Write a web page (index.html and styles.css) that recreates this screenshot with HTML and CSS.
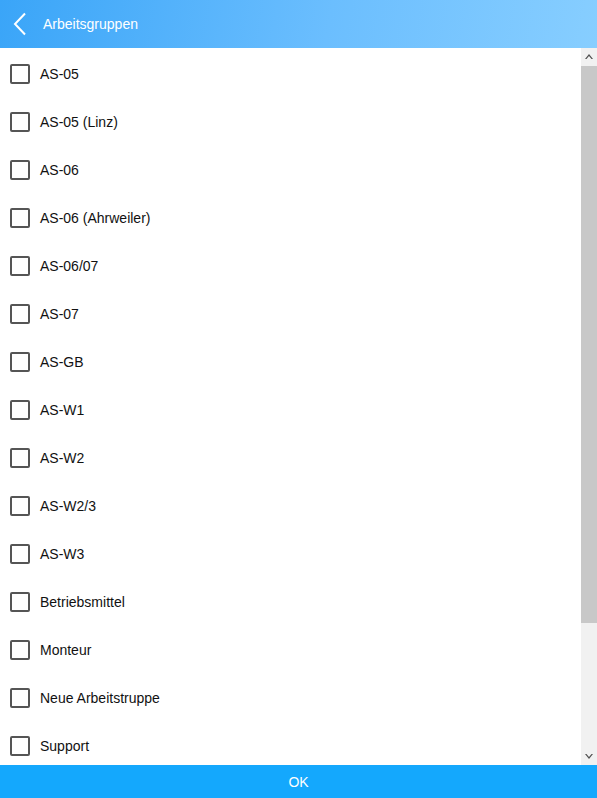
FILE: index.html
```html
<!DOCTYPE html>
<html lang="de">
<head>
<meta charset="utf-8">
<title>Arbeitsgruppen</title>
<link rel="stylesheet" href="styles.css">
</head>
<body>
<div class="app">
  <header class="header">
    <span class="back">
      <svg width="14" height="24" viewBox="0 0 14 24"><path d="M12 1.5 L2 12 L12 22.5" fill="none" stroke="#fff" stroke-width="2"/></svg>
    </span>
    <span class="title">Arbeitsgruppen</span>
  </header>
  <div class="main">
    <ul class="list">
      <li class="row"><span class="box"></span><span class="label">AS-05</span></li>
      <li class="row"><span class="box"></span><span class="label">AS-05 (Linz)</span></li>
      <li class="row"><span class="box"></span><span class="label">AS-06</span></li>
      <li class="row"><span class="box"></span><span class="label">AS-06 (Ahrweiler)</span></li>
      <li class="row"><span class="box"></span><span class="label">AS-06/07</span></li>
      <li class="row"><span class="box"></span><span class="label">AS-07</span></li>
      <li class="row"><span class="box"></span><span class="label">AS-GB</span></li>
      <li class="row"><span class="box"></span><span class="label">AS-W1</span></li>
      <li class="row"><span class="box"></span><span class="label">AS-W2</span></li>
      <li class="row"><span class="box"></span><span class="label">AS-W2/3</span></li>
      <li class="row"><span class="box"></span><span class="label">AS-W3</span></li>
      <li class="row"><span class="box"></span><span class="label">Betriebsmittel</span></li>
      <li class="row"><span class="box"></span><span class="label">Monteur</span></li>
      <li class="row"><span class="box"></span><span class="label">Neue Arbeitstruppe</span></li>
      <li class="row"><span class="box"></span><span class="label">Support</span></li>
    </ul>
    <div class="scrollbar">
      <div class="sb-btn">
        <svg width="8" height="5" viewBox="0 0 8 5"><path d="M0 5 L4 0 L8 5 L6.5 5 L4 2 L1.5 5 Z" fill="#505050"/></svg>
      </div>
      <div class="sb-track"><div class="sb-thumb"></div></div>
      <div class="sb-btn">
        <svg width="8" height="5" viewBox="0 0 8 5"><path d="M0 0 L4 5 L8 0 L6.5 0 L4 3 L1.5 0 Z" fill="#505050"/></svg>
      </div>
    </div>
  </div>
  <footer class="footer">OK</footer>
</div>
</body>
</html>
```
FILE: styles.css
```css
html, body {
  margin: 0;
  padding: 0;
  height: 100%;
}
body {
  font-family: "Liberation Sans", Arial, sans-serif;
  font-size: 14px;
  color: #111;
  background: #fff;
}
.app {
  display: flex;
  flex-direction: column;
  height: 798px;
  overflow: hidden;
}
.header {
  height: 48px;
  flex: 0 0 48px;
  display: flex;
  align-items: center;
  background: linear-gradient(100deg, #3aa5f8 0%, #6bbefe 55%, #87ceff 100%);
  color: #fff;
}
.back {
  display: flex;
  width: 14px;
  height: 24px;
  margin-left: 13px;
}
.title {
  margin-left: 16px;
  font-size: 14px;
  padding-bottom: 1px;
}
.main {
  flex: 1;
  display: flex;
  min-height: 0;
}
.list {
  flex: 1;
  list-style: none;
  margin: 0;
  padding: 2px 0 0 0;
  overflow: hidden;
}
.row {
  height: 48px;
  display: flex;
  align-items: center;
  padding-left: 10px;
}
.box {
  width: 16px;
  height: 16px;
  border: 2px solid #555;
  border-radius: 2px;
  flex: 0 0 auto;
}
.label {
  margin-left: 10px;
  color: #111;
}
.scrollbar {
  width: 16px;
  flex: 0 0 16px;
  display: flex;
  flex-direction: column;
  background: #f1f1f1;
}
.sb-btn {
  height: 17px;
  flex: 0 0 17px;
  display: flex;
  align-items: center;
  justify-content: center;
}
.sb-track {
  flex: 1;
  padding-top: 1px;
}
.sb-thumb {
  height: 557px;
  background: #c8c8c8;
}
.footer {
  height: 33px;
  flex: 0 0 33px;
  background: #14a8fd;
  color: #fff;
  display: flex;
  align-items: center;
  justify-content: center;
  font-size: 14px;
}
```
